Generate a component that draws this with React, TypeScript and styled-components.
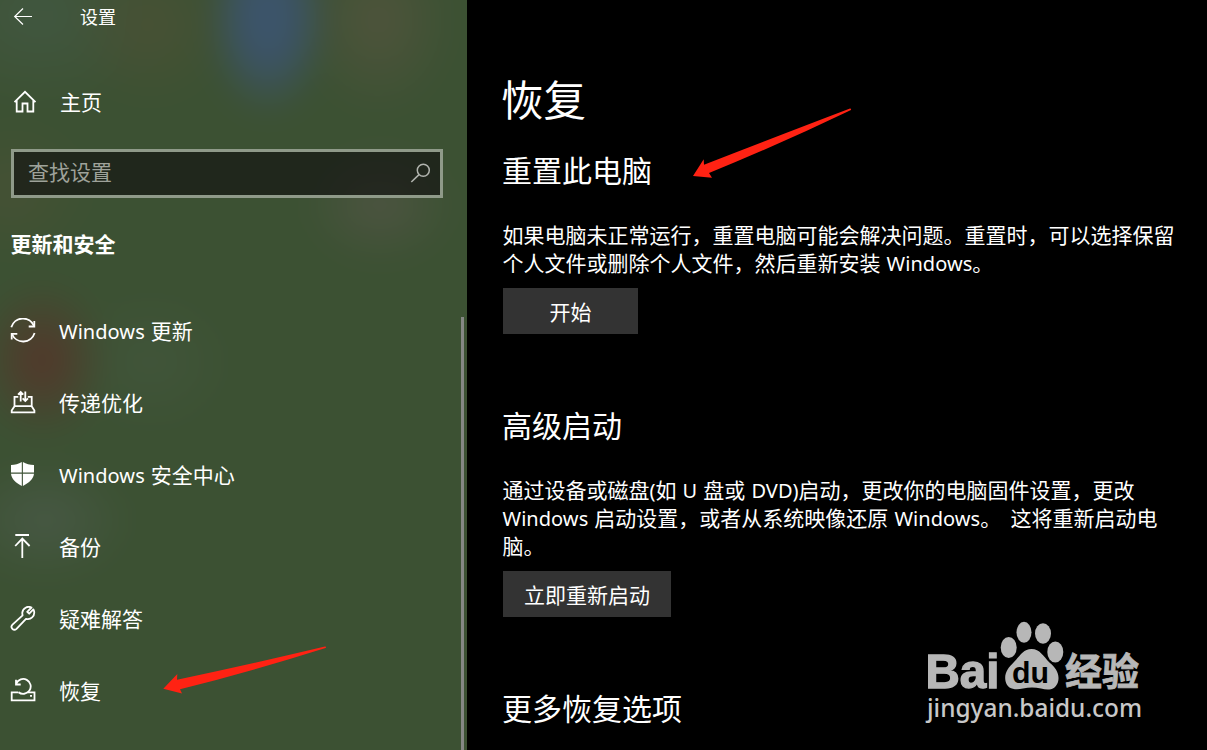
import React from 'react';
import styled, { createGlobalStyle } from 'styled-components';

const Global = createGlobalStyle`
  * { box-sizing: border-box; }
  html, body { margin: 0; padding: 0; background: #000; overflow: hidden; }
  body { font-family: "Noto Sans", "Noto Sans CJK SC", sans-serif; color: #fff; font-size: 21px; }
`;

const Window = styled.div`
  position: relative;
  display: flex;
  width: 1207px;
  height: 750px;
  overflow: hidden;
  background: #000;
`;

const Sidebar = styled.aside`
  display: flex;
  flex-direction: column;
  flex: none;
  position: relative;
  width: 467px;
  height: 750px;
  overflow: hidden;
  isolation: isolate;
  background: #3c5133;
`;

/* Wallpaper colours that shine through the translucent sidebar. */
const Acrylic = styled.div`
  position: absolute;
  inset: -40px;
  z-index: -1;
  filter: blur(14px);
  background:
    radial-gradient(ellipse 62px 100px at 308px 57px, rgba(60, 84, 110, 1), rgba(60, 84, 110, 0.85) 45%, rgba(60, 84, 90, 0) 100%),
    radial-gradient(ellipse 75px 95px at 418px 60px, rgba(80, 84, 60, 0.95), rgba(80, 84, 60, 0) 100%),
    radial-gradient(ellipse 80px 80px at 190px 65px, rgba(76, 80, 52, 0.75), rgba(76, 80, 52, 0) 100%),
    radial-gradient(ellipse 120px 90px at 80px 55px, rgba(66, 88, 66, 0.9), rgba(66, 88, 66, 0) 100%),
    radial-gradient(ellipse 75px 60px at 420px 245px, rgba(78, 84, 66, 0.95), rgba(78, 84, 66, 0) 100%),
    radial-gradient(ellipse 80px 70px at 52px 230px, rgba(72, 80, 52, 0.8), rgba(72, 80, 52, 0) 100%),
    radial-gradient(ellipse 66px 80px at 82px 400px, rgba(84, 54, 42, 1), rgba(84, 54, 42, 0) 100%),
    radial-gradient(ellipse 80px 70px at 190px 402px, rgba(66, 86, 60, 0.8), rgba(66, 86, 60, 0) 100%),
    radial-gradient(ellipse 85px 60px at 85px 560px, rgba(72, 89, 70, 0.95), rgba(72, 89, 70, 0) 100%),
    #3c5133;
`;

const TitleBar = styled.header`
  display: flex;
  align-items: center;
  height: 34px;
  padding-left: 13px;
  font-size: 18px;
  gap: 47px;
`;

const HomeLink = styled.a`
  display: flex;
  align-items: center;
  height: 42px;
  margin-top: 47px;
  padding-left: 13px;
  gap: 23px;
  line-height: 42px;
`;

const SearchBox = styled.div`
  display: flex;
  align-items: center;
  justify-content: space-between;
  width: 432px;
  height: 49px;
  margin: 26px 0 0 11px;
  padding: 0 9px 3px 14px;
  border: 3px solid #8f9a89;
  background: rgba(14, 12, 14, 0.6);
  background-clip: padding-box;
  color: #9ea29a;
`;

const Category = styled.h2`
  margin: 27px 0 0 10.5px;
  height: 40px;
  line-height: 38px;
  font-size: 21px;
  font-weight: 700;
`;

const Nav = styled.nav`
  display: flex;
  flex-direction: column;
  margin-top: 30px;
`;

const NavItem = styled.a`
  display: flex;
  align-items: center;
  height: 72px;
  padding-left: 10px;
  gap: 23px;
`;

const ScrollThumb = styled.div`
  position: absolute;
  left: 461px;
  top: 317px;
  width: 3px;
  height: 433px;
  background: #858785;
`;

const Icon = styled.svg<{ $stroke?: number }>`
  display: block;
  flex: none;
  fill: none;
  stroke: #fff;
  stroke-width: ${(p) => p.$stroke ?? 1.8};
`;

const Label = styled.span`
  white-space: pre;
  line-height: 28px;
`;

const Latin = styled.span<{ $space?: number }>`
  font-size: 20px;
  letter-spacing: 0.05px;
  word-spacing: ${(p) => p.$space ?? 0.8}px;
`;

const Content = styled.main`
  display: flex;
  flex-direction: column;
  align-items: flex-start;
  padding: 69px 0 0 36px;
`;

const PageTitle = styled.h1`
  margin: 0 0 0 -2px;
  height: 62px;
  line-height: 62px;
  font-size: 42.5px;
  font-weight: 400;
`;

const SectionTitle = styled.h2<{ $top: number }>`
  margin: ${(p) => p.$top}px 0 0 -1px;
  height: 44px;
  line-height: 44px;
  font-size: 30px;
  font-weight: 400;
`;

const Description = styled.p`
  margin: 28px 0 0 -0.5px;
  white-space: pre;
  line-height: 28px;
`;

const Line = styled.span`
  display: block;
  height: 28px;
`;

const Button = styled.button<{ $width: number }>`
  width: ${(p) => p.$width}px;
  height: 46px;
  margin-top: 11px;
  padding: 2px 0 0;
  border: 0;
  background: #333;
  color: #fff;
  font: inherit;
  line-height: 44px;
`;

const Overlay = styled.svg`
  position: absolute;
  inset: 0;
  pointer-events: none;
`;

const icons = {
  update: (
    <>
      <path d="M1.3 9.3A12 12 0 0 1 24 8M24.6 15A12 12 0 0 1 2 16" />
      <path d="M24.3 3v5.5H18.7M1.7 21.5v-5.7H7.3" />
    </>
  ),
  delivery: (
    <>
      <path d="M8.3 6.8H4.5V16.2H21.7V6.8H17.8M4.5 16.2L1.7 20.6V22.3H24.4V20.6L21.7 16.2" />
      <path d="M10.7 11.5V1.8M8 4.7L10.7 2L13.3 4.7M15.3 1.5V11M12.6 8.3L15.3 11L18 8.3" />
    </>
  ),
  shield: (
    <path
      fill="#fff"
      stroke="none"
      d="M11.8 0V10.6H1V3C5 3 8.5 2 11.8 0ZM12.9 0C16.2 2 19.7 3 24 3V10.6H12.9ZM1 11.7H11.8V24C6 20.8 1.6 17 1 11.7ZM12.9 11.7H24C23.4 17 18.7 20.8 12.9 24Z"
    />
  ),
  backup: <path d="M5.3 1H19M12.3 24V4.6M5.2 12L12.3 4.6L19.6 12" />,
  wrench: (
    <path
      strokeLinejoin="round"
      d="M21.5 1.5C17.6-.4 12.8 2.2 12.3 6.6C12.2 7.6 12.4 8.5 12.6 9.3L2.5 18.6C-.3 21.5 3.6 25.5 6.5 22.8L16 12.8C20.6 14.2 25.1 10.2 24.1 5.2C23.9 4.5 23.7 4 23.4 3.4L19.2 7.7L17.2 5.8Z"
    />
  ),
  recovery: (
    <>
      <path d="M8.3 14.3H1.7V22.3H24.5V14.3H17.8" />
      <path d="M8.5 14.3A7.5 7.5 0 1 0 6.3 5.5M6 1.8V6.5H10.7M8.5 14.3Q13 17.5 17.7 14.3" />
      <path d="M20 17.8h2" />
    </>
  ),
};

const navItems: { icon: keyof typeof icons; latin?: string; text: string }[] = [
  { icon: 'update', latin: 'Windows ', text: '更新' },
  { icon: 'delivery', text: '传递优化' },
  { icon: 'shield', latin: 'Windows ', text: '安全中心' },
  { icon: 'backup', text: '备份' },
  { icon: 'wrench', text: '疑难解答' },
  { icon: 'recovery', text: '恢复' },
];

export default function App() {
  return (
    <>
      <Global />
      <Window>
        <Sidebar>
          <Acrylic />
          <TitleBar>
            <Icon width="20" height="18" viewBox="0 0 20 18" $stroke={1.2}>
              <path d="M1.5 8.5H19M10 .5L1.7 8.5L10 16.5" />
            </Icon>
            <Label>设置</Label>
          </TitleBar>
          <HomeLink>
            <Icon width="24" height="24" viewBox="0 0 24 24">
              <path d="M1.5 12.2L12 1.8L22.5 12.2M3.7 10.5V21.5H9.5V13.5H14.5V21.5H20.3V10.5" />
            </Icon>
            <Label>主页</Label>
          </HomeLink>
          <SearchBox>
            <Label>查找设置</Label>
            <Icon width="22" height="22" viewBox="0 0 22 22" $stroke={1.5}>
              <g stroke="#b1b4ae">
                <circle cx="14.3" cy="9.2" r="6" />
                <path d="M10 13.6L2.3 21" />
              </g>
            </Icon>
          </SearchBox>
          <Category>更新和安全</Category>
          <Nav>
            {navItems.map((item) => (
              <NavItem key={item.icon}>
                <Icon width="26" height="26" viewBox="0 0 26 26">
                  {icons[item.icon]}
                </Icon>
                <Label>
                  {item.latin && <Latin>{item.latin}</Latin>}
                  {item.text}
                </Label>
              </NavItem>
            ))}
          </Nav>
          <ScrollThumb />
        </Sidebar>

        <Content>
          <PageTitle>恢复</PageTitle>
          <SectionTitle $top={18}>重置此电脑</SectionTitle>
          <Description>
            <Line>如果电脑未正常运行，重置电脑可能会解决问题。重置时，可以选择保留</Line>
            <Line>
              个人文件或删除个人文件，然后重新安装<Latin> Windows</Latin>。
            </Line>
          </Description>
          <Button $width={135}>开始</Button>
          <SectionTitle $top={70}>高级启动</SectionTitle>
          <Description>
            <Line>
              通过设备或磁盘<Latin>(</Latin>如<Latin> U </Latin>盘或<Latin> DVD)</Latin>启动，更改你的电脑固件设置，更改
            </Line>
            <Line>
              <Latin>Windows </Latin>启动设置，或者从系统映像还原<Latin> Windows</Latin>。<Latin $space={-0.6}>  </Latin>这将重新启动电
            </Line>
            <Line>脑。</Line>
          </Description>
          <Button $width={168}>立即重新启动</Button>
          <SectionTitle $top={70}>更多恢复选项</SectionTitle>
        </Content>

        <Overlay width="1207" height="750" viewBox="0 0 1207 750">
          <g fill="#ff2213">
            <path d="M693 176L703.7 159.3L704 164.7Q770 139 850 108.5Q852 109 850.5 110.2Q778 145 709 173L712 177.7Z" />
            <path d="M163.3 688.8L177.3 674L177 679.7Q247 665 325 646.5Q327 647 325.5 648Q253 671 180 689.3L182 693.5Z" />
          </g>
          <g fill="#b7b7b7">
            <ellipse cx="1008.7" cy="647.5" rx="8" ry="10.5" />
            <ellipse cx="1024" cy="632.3" rx="7.5" ry="10.5" />
            <ellipse cx="1043" cy="633.5" rx="8" ry="10.2" />
            <ellipse cx="1055.3" cy="652" rx="8" ry="10.5" />
            <path d="M1031.5 649C1040 649 1043 656 1050 663C1056 668 1060 674 1058 682C1055 690.5 1048 690.5 1041 688.5Q1032 686.5 1023 688.5C1015 690.5 1007 689 1005.5 681C1004 673 1008 668 1014 662C1020 656 1023 649 1031.5 649Z" />
            <g fontFamily="'Liberation Sans', Arial, sans-serif" fontWeight="700">
              <text x="925.5" y="687.5" fontSize="49" textLength="74" lengthAdjust="spacingAndGlyphs" stroke="#b7b7b7" strokeWidth="1.4">Bai</text>
              <text x="1012" y="682.5" fontSize="30" textLength="37" lengthAdjust="spacingAndGlyphs" fill="#000">du</text>
            </g>
            <text x="1065" y="685" fontSize="37.5" fontWeight="700" textLength="74" lengthAdjust="spacingAndGlyphs" stroke="#b7b7b7" strokeWidth="0.8" fontFamily="'Noto Sans CJK SC', sans-serif">经验</text>
            <text x="927" y="717" fontSize="25" fontWeight="500" textLength="215" lengthAdjust="spacingAndGlyphs" fill="#c8c8c8" fontFamily="'Noto Sans', sans-serif">jingyan.baidu.com</text>
          </g>
        </Overlay>
      </Window>
    </>
  );
}
